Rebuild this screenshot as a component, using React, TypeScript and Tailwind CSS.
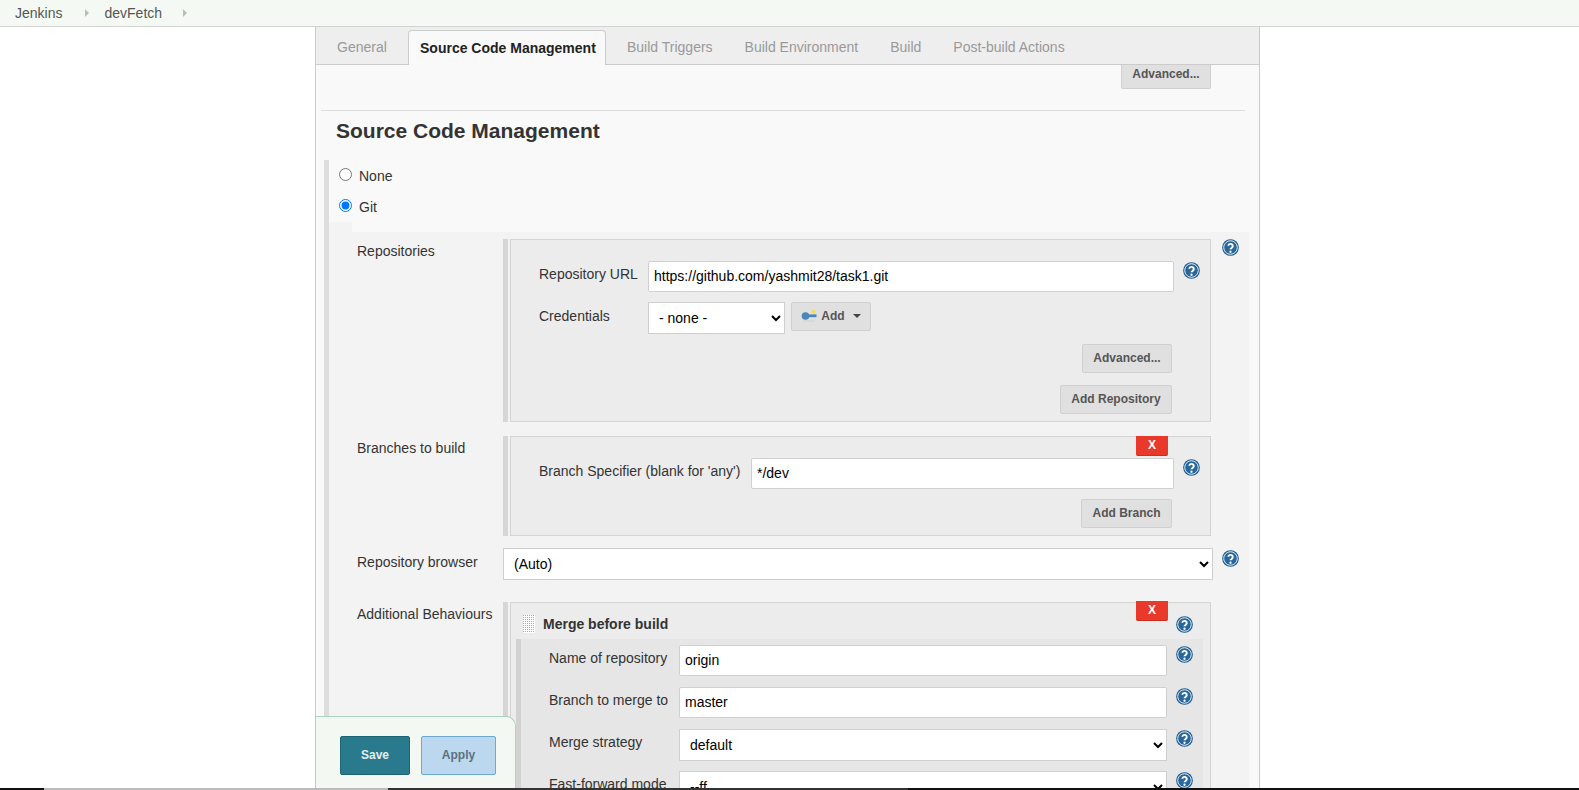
import React from "react";

function Help({ className = "" }: { className?: string }) {
  return (
    <svg viewBox="0 0 24 24" className={"w-[17px] h-[17px] shrink-0 " + className}>
      <circle cx="12" cy="12" r="11.8" fill="#1d5c8f" />
      <circle cx="12" cy="12" r="9.6" fill="#29679b" stroke="#e8eef4" strokeWidth="1.4" />
      <path d="M8.7 9.4a3.3 3.3 0 0 1 6.5 1c0 2.1-3.2 2.3-3.2 4.2" fill="none" stroke="#fff" strokeWidth="2.7" />
      <circle cx="12" cy="18" r="1.6" fill="#fff" />
    </svg>
  );
}

function Chevron({ className = "" }: { className?: string }) {
  return (
    <svg viewBox="0 0 6 10" className={"w-[6px] h-[10px] " + className}>
      <path d="M1 1l4 4-4 4z" fill="#bbb" />
    </svg>
  );
}

function Btn({ children, className = "" }: { children: React.ReactNode; className?: string }) {
  return (
    <div
      className={
        "h-[29px] flex items-center justify-center bg-[#e0e0e0] border border-[#d0d0d0] rounded-[2px] text-[12px] font-bold text-[#555] pb-[2px] " +
        className
      }
    >
      {children}
    </div>
  );
}

function XBtn({ className = "" }: { className?: string }) {
  return (
    <div
      className={
        "absolute right-[42px] w-[32px] h-[20px] bg-[#e9392a] rounded-b-[2px] border-b border-[#c9301f] text-white text-[12px] font-bold flex items-center justify-center pb-[2px] " +
        className
      }
    >
      X
    </div>
  );
}

const fieldCls = "h-[31px] bg-white border border-[#d0d0d0] rounded-[2px] text-[14px] text-black px-[5px] pb-[2px] outline-none";
const selectCls = "h-[32px] bg-white border border-[#cfcfcf] text-[14px] text-black pl-[6px] pr-[1px] outline-none";

function Row({ label, top = 4, children, help = "" }: { label: string; top?: number; children: React.ReactNode; help?: string }) {
  return (
    <div className="flex pl-[28px]">
      <div className={"w-[146px] text-[14px] leading-[16px] text-[#333] " + (top === 4 ? "pt-[4px]" : "pt-[6px]")}>{label}</div>
      <div className="w-[710px]">{children}</div>
      {help ? <Help className={"ml-[9px] " + help} /> : null}
    </div>
  );
}

function Block({ children, className = "" }: { children: React.ReactNode; className?: string }) {
  return (
    <div className="flex w-[708px]">
      <div className="w-[5px] bg-[#d6d6d6] shrink-0" />
      <div className={"relative ml-[2px] w-[701px] bg-[#ececec] border border-[#d3d3d3] " + className}>{children}</div>
    </div>
  );
}

function Merge({ label, children }: { label: string; children: React.ReactNode }) {
  return (
    <div className="flex h-[42px]">
      <div className="w-[158px] pl-[28px] pt-[5px] text-[14px] leading-[16px] text-[#333] whitespace-nowrap">{label}</div>
      {children}
      <Help className="ml-[9px] mt-[1px]" />
    </div>
  );
}

export default function App() {
  return (
    <div className="relative h-[790px] overflow-hidden bg-white font-['Liberation_Sans',Arial,sans-serif]">
      <div className="h-[27px] bg-[#f4faf3] border-b border-[#d3d3d3] flex items-center pl-[15px] text-[14px] text-[#555]">
        <span>Jenkins</span>
        <Chevron className="ml-[22px] mr-[14px]" />
        <span>devFetch</span>
        <Chevron className="ml-[20px]" />
      </div>

      <div className="ml-[315px] w-[945px] border-x border-[#cccccc] bg-[#f9f9f9] h-[763px]">
        <div className="h-[38px] bg-[#eeeeee] border-b border-[#cccccc] flex text-[14px] text-[#999]">
          <div className="w-[92px] pl-[21px] pt-[12px] leading-[16px]">General</div>
          <div className="w-[198px] h-[35px] mt-[3px] bg-[#f9f9f9] border border-b-0 border-[#cccccc] rounded-t-[4px] pt-[9px] pl-[11px] leading-[16px] font-bold text-[#222] text-[14px] whitespace-nowrap">
            Source Code Management
          </div>
          <div className="pl-[21px] pt-[12px] leading-[16px]">Build Triggers</div>
          <div className="pl-[32px] pt-[12px] leading-[16px]">Build Environment</div>
          <div className="pl-[32px] pt-[12px] leading-[16px]">Build</div>
          <div className="pl-[32px] pt-[12px] leading-[16px]">Post-build Actions</div>
        </div>

        <div className="flex justify-end pr-[48px]">
          <div className="w-[90px] h-[24px] bg-[#e0e0e0] border border-t-0 border-[#cfcfcf] rounded-b-[2px] text-[12px] font-bold text-[#555] flex items-center justify-center pb-[6px]">
            Advanced...
          </div>
        </div>

        <div className="mt-[21px] ml-[5px] mr-[14px] h-px bg-[#dddddd]" />
        <div className="mt-[8px] ml-[20px] text-[21px] leading-[24px] font-bold text-[#333]">Source Code Management</div>

        <div className="mt-[17px] ml-[8px] border-l-[5px] border-[#dddddd] h-[700px]">
          <div className="flex items-center h-[32px] pl-[10px] text-[14px] text-[#333] pt-[1px]">
            <input type="radio" name="scm" className="w-[13px] h-[13px] m-0 mb-[4px]" readOnly />
            <span className="ml-[7px]">None</span>
          </div>
          <div className="flex items-center h-[30px] pl-[10px] text-[14px] text-[#333]">
            <input type="radio" name="scm" defaultChecked className="w-[13px] h-[13px] m-0 mb-[4px]" />
            <span className="ml-[7px]">Git</span>
          </div>
          <div className="h-[10px] w-[23px] bg-[#f3f3f3]" />
          <div className="w-[920px] bg-[#f3f3f3] pt-[7px] h-[700px]">
            <Row label="Repositories" help="mt-0">
              <Block className="h-[183px] pt-[21px] pl-[28px]">
                <div className="flex">
                  <div className="w-[109px] text-[14px] leading-[16px] text-[#333] pt-[5px]">Repository URL</div>
                  <input className={fieldCls + " w-[526px]"} defaultValue="https://github.com/yashmit28/task1.git" />
                  <Help className="ml-[9px] mt-[1px]" />
                </div>
                <div className="flex mt-[10px]">
                  <div className="w-[109px] text-[14px] leading-[16px] text-[#333] pt-[6px]">Credentials</div>
                  <select className={selectCls + " w-[137px]"} defaultValue="none">
                    <option value="none">- none -</option>
                  </select>
                  <Btn className="ml-[6px] w-[80px]">
                    <svg viewBox="0 0 16 14" className="w-[16px] h-[14px] mr-[4px]">
                      <circle cx="4.5" cy="7" r="3.8" fill="#4a86b8" />
                      <rect x="6" y="5.4" width="9.5" height="2.8" fill="#4a86b8" />
                      <circle cx="12.5" cy="2.8" r="2" fill="#f2dc62" />
                      <rect x="2" y="11.5" width="12" height="1" fill="#cfcfcf" />
                    </svg>
                    Add
                    <svg viewBox="0 0 8 4" className="w-[8px] h-[4px] ml-[8px]">
                      <path d="M0 0h8L4 4z" fill="#444" />
                    </svg>
                  </Btn>
                </div>
                <div className="flex justify-end mt-[10px] mr-[38px]">
                  <Btn className="w-[90px]">Advanced...</Btn>
                </div>
                <div className="flex justify-end mt-[12px] mr-[38px]">
                  <Btn className="w-[112px]">Add Repository</Btn>
                </div>
              </Block>
            </Row>

            <div className="mt-[14px]">
              <Row label="Branches to build">
                <Block className="h-[100px] pt-[21px] pl-[28px]">
                  <XBtn className="top-[-1px]" />
                  <div className="flex">
                    <div className="w-[212px] text-[14px] leading-[16px] text-[#333] pt-[5px] whitespace-nowrap">Branch Specifier (blank for 'any')</div>
                    <input className={fieldCls + " w-[423px]"} defaultValue="*/dev" />
                    <Help className="ml-[9px] mt-[1px]" />
                  </div>
                  <div className="flex justify-end mt-[10px] mr-[38px]">
                    <Btn className="w-[91px]">Add Branch</Btn>
                  </div>
                </Block>
              </Row>
            </div>

            <div className="mt-[12px]">
              <Row label="Repository browser" top={6} help="mt-[2px]">
                <select className={selectCls + " w-[710px]"} defaultValue="auto">
                  <option value="auto">(Auto)</option>
                </select>
              </Row>
            </div>

            <div className="mt-[22px]">
              <Row label="Additional Behaviours">
                <Block className="h-[300px]">
                  <XBtn className="top-[-2px]" />
                  <div className="flex h-[36px] pl-[12px] items-center">
                    <svg viewBox="0 0 12 18" className="w-[12px] h-[18px] mt-[6px]">
                      <defs>
                        <pattern id="grip" width="2" height="2" patternUnits="userSpaceOnUse">
                          <rect width="1" height="1" fill="#aaa" />
                        </pattern>
                      </defs>
                      <rect width="12" height="18" fill="#fff" />
                      <rect width="12" height="18" fill="url(#grip)" />
                    </svg>
                    <span className="ml-[8px] mt-[6px] text-[14px] font-bold text-[#333]">Merge before build</span>
                    <Help className="ml-[508px] mt-[6px]" />
                  </div>
                  <div className="flex ml-[5px] w-[687px] h-[260px]">
                    <div className="w-[5px] bg-[#d2d2d2] shrink-0" />
                    <div className="w-[682px] bg-[#e6e6e6] pt-[6px]">
                      <Merge label="Name of repository">
                        <input className={fieldCls + " w-[488px]"} defaultValue="origin" />
                      </Merge>
                      <Merge label="Branch to merge to">
                        <input className={fieldCls + " w-[488px]"} defaultValue="master" />
                      </Merge>
                      <Merge label="Merge strategy">
                        <select className={selectCls + " w-[488px]"} defaultValue="default">
                          <option value="default">default</option>
                        </select>
                      </Merge>
                      <Merge label="Fast-forward mode">
                        <select className={selectCls + " w-[488px]"} defaultValue="ff">
                          <option value="ff">--ff</option>
                        </select>
                      </Merge>
                    </div>
                  </div>
                </Block>
              </Row>
            </div>
          </div>
        </div>
      </div>

      <div className="absolute left-[315px] top-[716px] w-[201px] h-[74px] bg-[#f3f8f2] border border-b-0 border-[#a9d3c3] rounded-tr-[10px] flex items-start pt-[19px] pl-[24px] gap-[11px]">
        <div className="w-[70px] h-[39px] bg-[#2a7a8e] border border-[#1f6474] rounded-[2px] text-[#e6eef0] text-[12px] font-bold flex items-center justify-center pb-[2px]">
          Save
        </div>
        <div className="w-[75px] h-[39px] bg-[#bcd8ee] border border-[#6ea8d2] rounded-[2px] text-[#5d6f80] text-[12px] font-bold flex items-center justify-center pb-[2px]">
          Apply
        </div>
      </div>

      <div className="absolute left-0 right-0 bottom-0 h-[2px] flex bg-[#111]">
        <div className="w-[44px] bg-[#111]" />
        <div className="w-[344px] bg-[#bbbbbb]" />
        <div className="w-[520px] bg-[#333333]" />
      </div>
    </div>
  );
}
